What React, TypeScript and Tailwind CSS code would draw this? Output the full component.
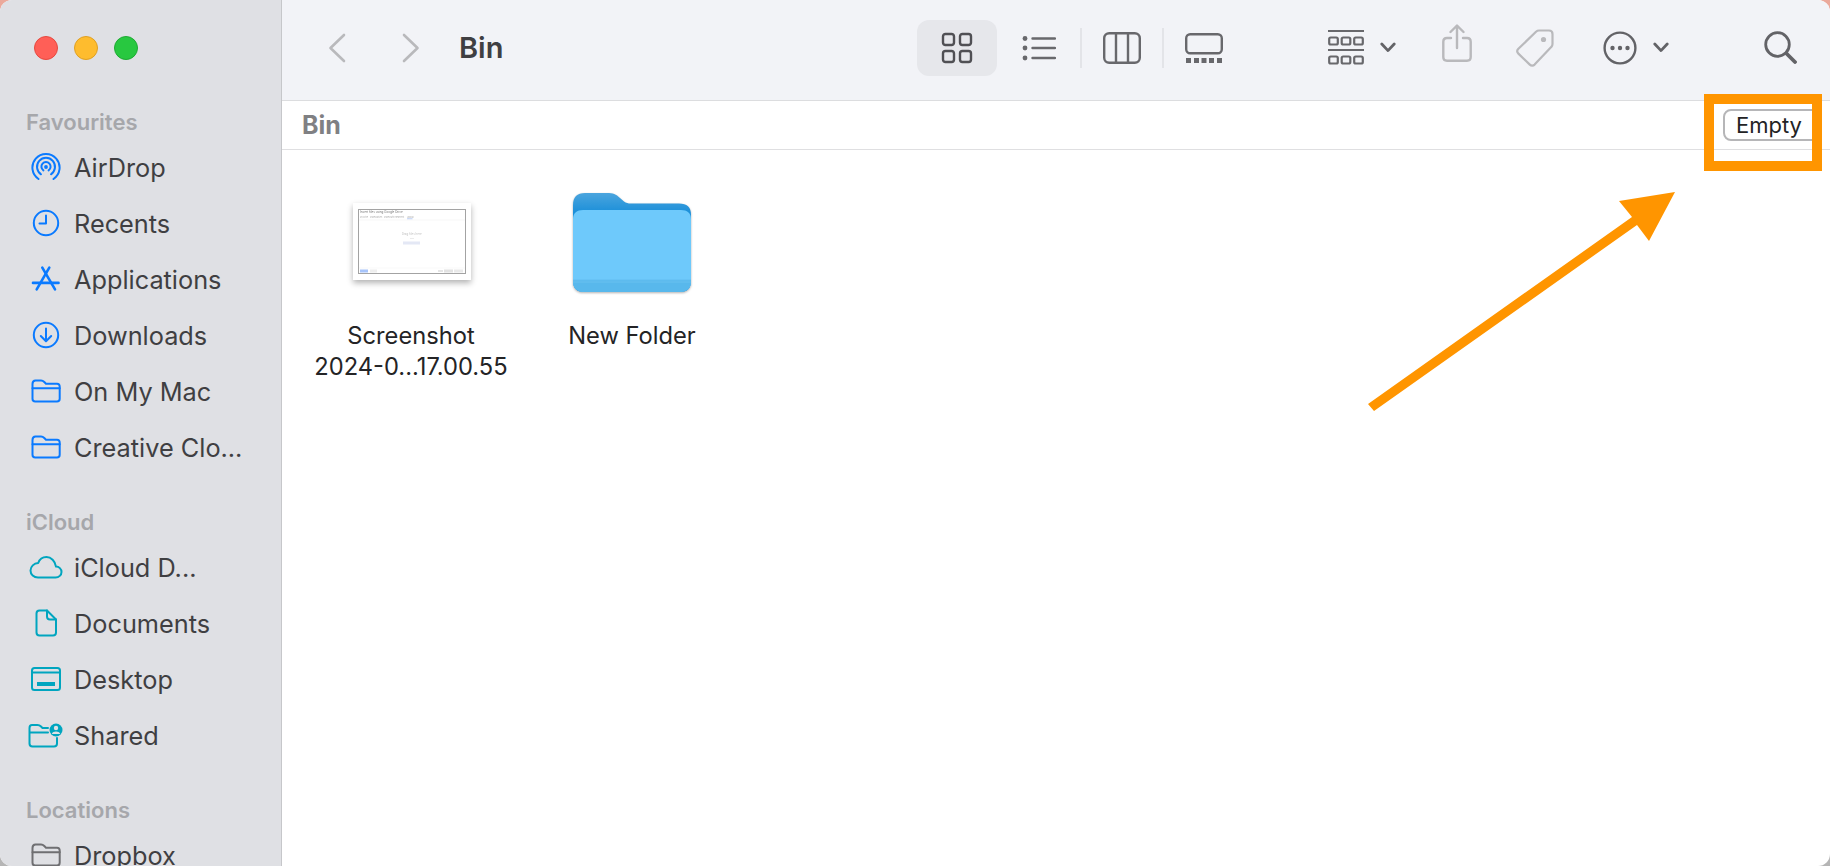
import type { ReactNode } from "react";

const BLUE = "#0a7aff";
const TEAL = "#00a5bf";
const GRAY = "#6f6f72";

const Glyph = ({ w, h, children, className = "" }: { w: number; h: number; children: ReactNode; className?: string }) => (
  <svg width={w} height={h} viewBox={`0 0 ${w} ${h}`} fill="none" strokeLinecap="round" strokeLinejoin="round" className={`block shrink-0 ${className}`}>
    {children}
  </svg>
);

const AirDropIcon = () => (
  <Glyph w={30} h={30}>
    <g stroke={BLUE} strokeWidth="2">
      <path d="M7.5 27a13.6 13.6 0 1 1 15 0" />
      <path d="M10 22.3a9 9 0 1 1 10 0" />
      <path d="M12.4 18.4a4.6 4.6 0 1 1 5.2 0" />
    </g>
    <circle cx="15" cy="15" r="1.9" fill={BLUE} />
  </Glyph>
);

const ClockIcon = () => (
  <Glyph w={30} h={30}>
    <circle cx="15" cy="15" r="12.2" stroke={BLUE} strokeWidth="2" />
    <path d="M15 7.5V15.5H8.5" stroke={BLUE} strokeWidth="2" />
  </Glyph>
);

const AppsIcon = () => (
  <Glyph w={30} h={30}>
    <g stroke={BLUE} strokeWidth="2.6">
      <path d="M11.3 3.7 24 25.3" />
      <path d="M18.3 3.7 5.7 25.3" />
      <path d="M2 18.9H27.5" />
    </g>
  </Glyph>
);

const DownloadIcon = () => (
  <Glyph w={30} h={30}>
    <circle cx="15" cy="15" r="12.2" stroke={BLUE} strokeWidth="2" />
    <path d="M15 8.5V21M9.8 16 15 21.2 20.2 16" stroke={BLUE} strokeWidth="2" />
  </Glyph>
);

const FolderIcon = ({ color }: { color: string }) => (
  <Glyph w={30} h={24}>
    <path
      d="M1.5 5C1.5 2.8 2.6 1.5 4.5 1.5H10C11.5 1.5 12.3 2 13.3 3L15 4.7H26C27.8 4.7 28.7 5.8 28.7 7.5V19.8C28.7 21.6 27.8 22.6 26 22.6H4.2C2.4 22.6 1.5 21.6 1.5 19.8Z"
      stroke={color}
      strokeWidth="2"
    />
    <path d="M1.5 9.3H28.7" stroke={color} strokeWidth="2" />
  </Glyph>
);

const CloudIcon = () => (
  <Glyph w={34} h={24}>
    <path
      d="M9 22.5H26.5C30 22.5 32.5 20 32.5 17C32.5 13.8 30 11.6 27 11.6C26.2 6 22 2 17.5 2C13.5 2 10.5 4.3 9.2 8C5 8.3 1.5 11.5 1.5 15.5C1.5 19.5 4.8 22.5 9 22.5Z"
      stroke={TEAL}
      strokeWidth="2"
    />
  </Glyph>
);

const DocIcon = () => (
  <Glyph w={24} h={28}>
    <path
      d="M5.5 1.5H13L22 10.5V23.5C22 25.5 21 26.5 19 26.5H5.5C3.5 26.5 2.5 25.5 2.5 23.5V4.5C2.5 2.5 3.5 1.5 5.5 1.5Z"
      stroke={TEAL}
      strokeWidth="2"
    />
    <path d="M13 1.5V7.5C13 9.5 14 10.5 16 10.5H22" stroke={TEAL} strokeWidth="2" />
  </Glyph>
);

const DesktopIcon = () => (
  <Glyph w={30} h={24}>
    <rect x="1" y="1" width="28" height="22" rx="2.5" stroke={TEAL} strokeWidth="2" />
    <path d="M1 5.5H29" stroke={TEAL} strokeWidth="2" />
    <rect x="6" y="15" width="18" height="4" fill={TEAL} />
  </Glyph>
);

const SharedIcon = () => (
  <Glyph w={35} h={25}>
    <path
      d="M1.5 5C1.5 3 2.5 2 4 2H9.5C11 2 12 2.5 13 3.5L14.5 5H20M1.5 9.5H20M29 15V20.5C29 22.5 28 23.5 26 23.5H4.5C2.5 23.5 1.5 22.5 1.5 20.5V5"
      stroke={TEAL}
      strokeWidth="2"
    />
    <circle cx="28" cy="7" r="6.5" fill={TEAL} />
    <circle cx="28" cy="5" r="2.2" fill="#dfe0e4" />
    <path d="M23.8 11C24.5 9 26 8.4 28 8.4C30 8.4 31.5 9 32.2 11Z" fill="#dfe0e4" />
  </Glyph>
);

const favourites = [
  { icon: <AirDropIcon />, label: "AirDrop" },
  { icon: <ClockIcon />, label: "Recents" },
  { icon: <AppsIcon />, label: "Applications" },
  { icon: <DownloadIcon />, label: "Downloads" },
  { icon: <FolderIcon color={BLUE} />, label: "On My Mac" },
  { icon: <FolderIcon color={BLUE} />, label: "Creative Clo..." },
];

const icloud = [
  { icon: <CloudIcon />, label: "iCloud D..." },
  { icon: <DocIcon />, label: "Documents" },
  { icon: <DesktopIcon />, label: "Desktop" },
  { icon: <SharedIcon />, label: "Shared" },
];

const locations = [{ icon: <FolderIcon color={GRAY} />, label: "Dropbox" }];

const SidebarSection = ({ title, rows, className = "" }: { title: string; rows: { icon: ReactNode; label: string }[]; className?: string }) => (
  <div className={className}>
    <div className="mb-[3px] flex h-[28px] items-center pl-[26px] text-[22px] font-semibold text-[#a6a7ab]">{title}</div>
    {rows.map((r) => (
      <div key={r.label} className="flex h-[56px] items-center">
        <div className="flex w-[74px] shrink-0 justify-center pl-[17px]">{r.icon}</div>
        <span className="mt-[1px] whitespace-nowrap text-[25.3px] text-[#3f3f42]">{r.label}</span>
      </div>
    ))}
  </div>
);

const Chevron = ({ dir }: { dir: "left" | "right" }) => (
  <Glyph w={18} h={30}>
    <path d={dir === "left" ? "M16 2 2.5 15 16 28" : "M2 2 15.5 15 2 28"} stroke="#b9b9bc" strokeWidth="2.6" />
  </Glyph>
);

const SmallChevron = () => (
  <Glyph w={16} h={11}>
    <path d="M1.8 2 8 8.6 14.2 2" stroke="#636367" strokeWidth="2.8" />
  </Glyph>
);

const IconGrid = () => (
  <Glyph w={32} h={32}>
    <g stroke="#505054" strokeWidth="2.4">
      <rect x="2" y="2" width="11" height="11" rx="2.4" />
      <rect x="19" y="2" width="11" height="11" rx="2.4" />
      <rect x="2" y="19" width="11" height="11" rx="2.4" />
      <rect x="19" y="19" width="11" height="11" rx="2.4" />
    </g>
  </Glyph>
);

const IconList = () => (
  <Glyph w={34} h={26}>
    <g fill="#68686c">
      <circle cx="3" cy="3.5" r="2.4" />
      <circle cx="3" cy="13" r="2.4" />
      <circle cx="3" cy="23" r="2.4" />
    </g>
    <path d="M10.5 3.5H33M10.5 13H33M10.5 23H33" stroke="#68686c" strokeWidth="2.4" />
  </Glyph>
);

const IconColumns = () => (
  <Glyph w={38} h={32}>
    <rect x="1.2" y="1.2" width="35.6" height="29.6" rx="5" stroke="#68686c" strokeWidth="2.4" />
    <path d="M13 1.2V30.8M25 1.2V30.8" stroke="#68686c" strokeWidth="2.4" />
  </Glyph>
);

const IconGallery = () => (
  <Glyph w={38} h={30}>
    <rect x="1.2" y="1.2" width="35.6" height="19" rx="4" stroke="#68686c" strokeWidth="2.4" />
    <g fill="#68686c">
      <rect x="1" y="25" width="5" height="5" />
      <rect x="9" y="25" width="5" height="5" />
      <rect x="16.5" y="25" width="5" height="5" />
      <rect x="24" y="25" width="5" height="5" />
      <rect x="32" y="25" width="5" height="5" />
    </g>
  </Glyph>
);

const IconGroup = () => (
  <Glyph w={36} h={35}>
    <g stroke="#68686c" strokeWidth="2.2">
      <path d="M0.5 1H35.5M0.5 20H35.5" />
      <rect x="1.2" y="7.5" width="8.6" height="7" rx="1.5" />
      <rect x="13.7" y="7.5" width="8.6" height="7" rx="1.5" />
      <rect x="26.2" y="7.5" width="8.6" height="7" rx="1.5" />
      <rect x="1.2" y="26.5" width="8.6" height="7" rx="1.5" />
      <rect x="13.7" y="26.5" width="8.6" height="7" rx="1.5" />
      <rect x="26.2" y="26.5" width="8.6" height="7" rx="1.5" />
    </g>
  </Glyph>
);

const IconShare = () => (
  <Glyph w={30} h={38}>
    <path d="M9 14H5C2.5 14 1.3 15.2 1.3 17.7V33C1.3 35.5 2.5 36.7 5 36.7H25C27.5 36.7 28.7 35.5 28.7 33V17.7C28.7 15.2 27.5 14 25 14H21" stroke="#b9b9bc" strokeWidth="2.4" />
    <path d="M15 24V2M8.5 8 15 1.5 21.5 8" stroke="#b9b9bc" strokeWidth="2.4" />
  </Glyph>
);

const IconTag = () => (
  <Glyph w={38} h={38}>
    <path d="M23 1.5H33C35.2 1.5 36.5 2.8 36.5 5V15C36.5 16.2 36.1 17.2 35.2 18.1L18.6 35.6C17.2 37 15.2 37 13.8 35.6L2.4 24.6C1 23.2 1 21.2 2.4 19.8L20 2.7C20.9 1.9 21.8 1.5 23 1.5Z" stroke="#b9b9bc" strokeWidth="2.2" />
    <circle cx="27.5" cy="10.5" r="2.6" fill="#b9b9bc" />
  </Glyph>
);

const IconMore = () => (
  <Glyph w={34} h={34}>
    <circle cx="17" cy="17" r="15.4" stroke="#636367" strokeWidth="2.4" />
    <g fill="#636367">
      <circle cx="9.5" cy="17" r="2.2" />
      <circle cx="17" cy="17" r="2.2" />
      <circle cx="24.5" cy="17" r="2.2" />
    </g>
  </Glyph>
);

const IconSearch = () => (
  <Glyph w={33} h={33}>
    <circle cx="13.5" cy="13.5" r="11.8" stroke="#636367" strokeWidth="2.8" />
    <path d="M22.5 22.5 31 31" stroke="#636367" strokeWidth="3.8" />
  </Glyph>
);

const Divider = ({ className = "" }: { className?: string }) => <div className={`h-[40px] w-[2px] shrink-0 bg-[#e3e4e8] ${className}`} />;

const Thumbnail = () => (
  <div className="h-[77px] w-[118px] bg-white shadow-[0_3px_6px_rgba(0,0,0,0.3)]">
    <svg width="118" height="77" viewBox="0 0 118 77" className="block blur-[0.4px]" fontFamily="Inter, sans-serif">
      <rect x="5.5" y="6.5" width="107" height="64" fill="white" stroke="#a3a3a3" />
      <text x="7" y="10" fontSize="3" fill="#777">Insert files using Google Drive</text>
      <g fontSize="1.9" fill="#aaa">
        <text x="7" y="14.5">My Drive</text>
        <text x="17" y="14.5">Shared drives</text>
        <text x="31" y="14.5">Shared with me</text>
        <text x="45" y="14.5">Recent</text>
        <text x="54" y="14.5">Upload</text>
      </g>
      <rect x="54" y="15.5" width="5.5" height="0.7" fill="#9db9f2" />
      <path d="M6 17H112" stroke="#eee" strokeWidth="0.5" />
      <text x="58.7" y="32" fontSize="2.9" fill="#c4c4c4" textAnchor="middle">Drag files here</text>
      <path d="M57 35.5H61" stroke="#ccc" strokeWidth="0.4" />
      <rect x="50" y="38.5" width="17" height="3" fill="#e4e8f5" />
      <path d="M6 65H112" stroke="#f0f0f0" strokeWidth="0.4" />
      <rect x="7" y="66.5" width="8" height="3" fill="#a7c4fa" />
      <rect x="17" y="66.5" width="7" height="3" fill="#eee" />
      <rect x="85" y="67.5" width="5" height="1" fill="#ccc" />
      <rect x="91" y="66.5" width="9" height="3" fill="#e2e2e2" />
      <rect x="101" y="66.5" width="9" height="3" fill="#e9e9e9" />
    </svg>
  </div>
);

const BlueFolder = () => (
  <svg width="118" height="100" viewBox="0 0 118 100" className="block drop-shadow-[0_1px_1px_rgba(0,0,0,0.3)]">
    <defs>
      <linearGradient id="back" x1="0" y1="0" x2="0" y2="1">
        <stop offset="0" stopColor="#4ba5de" />
        <stop offset="0.2" stopColor="#1b8fd9" />
      </linearGradient>
    </defs>
    <path d="M0 12C0 4 4 0 12 0H34C40 0 43 1 47 5L51 8.5C53 10 55 10.5 58 10.5H106C114 10.5 118 14 118 22V88C118 96 114 99 106 99H12C4 99 0 96 0 88Z" fill="url(#back)" />
    <path d="M0 26C0 20 4 17 10 17H108C114 17 118 20 118 26V88C118 95 114 99 106 99H12C4 99 0 95 0 88Z" fill="#6ec9fb" />
    <path d="M0 87V88C0 95 4 99 12 99H106C114 99 118 95 118 88V87Z" fill="#58b8ec" />
    <path d="M0 89H118" stroke="#69c1f0" strokeWidth="1" />
    <path d="M0 87H118" stroke="#62bdf0" strokeWidth="1" />
  </svg>
);

export default function App() {
  return (
    <div className="relative h-[866px] w-[1830px] overflow-hidden bg-gradient-to-b from-[#eba99b] to-[#b5b5b5] font-['Inter','Liberation_Sans',sans-serif] antialiased">
      <div className="flex h-full overflow-hidden rounded-[12px] bg-white">
        <aside className="h-full w-[282px] shrink-0 overflow-hidden border-r border-[#c6c7ca] bg-[#dfe0e4]">
          <div className="mb-[48px] mt-[36px] flex gap-[16px] pl-[34px]">
            <div className="h-[24px] w-[24px] rounded-full border border-[#e6493f] bg-[#ff5f57]" />
            <div className="h-[24px] w-[24px] rounded-full border border-[#dfa023] bg-[#febc2e]" />
            <div className="h-[24px] w-[24px] rounded-full border border-[#1eaa33] bg-[#28c840]" />
          </div>
          <SidebarSection title="Favourites" rows={favourites} />
          <SidebarSection title="iCloud" rows={icloud} className="mt-[33px]" />
          <SidebarSection title="Locations" rows={locations} className="mt-[33px]" />
        </aside>

        <main className="flex min-w-0 flex-1 flex-col">
          <header className="flex h-[101px] shrink-0 items-center border-b border-[#dcdddf] bg-[#f2f3f7] pb-[5px]">
            <div className="ml-[46px] flex items-center gap-[56px]">
              <Chevron dir="left" />
              <Chevron dir="right" />
            </div>
            <h1 className="ml-[39px] w-[458px] text-[29px] font-semibold text-[#3f3f42]">Bin</h1>
            <div className="flex h-[56px] w-[80px] items-center justify-center rounded-[12px] bg-[#e6e7eb]">
              <IconGrid />
            </div>
            <div className="ml-[25px]"><IconList /></div>
            <Divider className="ml-[24px]" />
            <div className="ml-[21px]"><IconColumns /></div>
            <Divider className="ml-[21px]" />
            <div className="ml-[21px]"><IconGallery /></div>
            <div className="ml-[105px]"><IconGroup /></div>
            <div className="ml-[16px]"><SmallChevron /></div>
            <div className="ml-[46px] -mt-[10px]"><IconShare /></div>
            <div className="ml-[44px]"><IconTag /></div>
            <div className="ml-[49px]"><IconMore /></div>
            <div className="ml-[16px]"><SmallChevron /></div>
            <div className="ml-[95px]"><IconSearch /></div>
          </header>

          <div className="flex h-[49px] shrink-0 items-center justify-between border-b border-[#dfdfe1] pl-[20px]">
            <span className="mt-[2px] text-[25px] font-bold text-[#808083]">Bin</span>
            <div className="mr-[10px] flex h-[32px] w-[97px] items-center rounded-[8px] border-2 border-[#b6b6b8] pl-[11px] text-[22px] text-[#232325]">
              Empty
            </div>
          </div>

          <div className="flex flex-1 items-start pl-[21px]">
            <div className="flex w-[216px] flex-col items-center">
              <div className="mb-[40px] ml-[2px] mt-[53px] flex h-[77px] items-center"><Thumbnail /></div>
              <p className="text-center text-[23.7px] leading-[31px] text-[#242426]">
                Screenshot
                <br />
                2024-0...17.00.55
              </p>
            </div>
            <div className="ml-[9px] flex w-[208px] flex-col items-center">
              <div className="mb-[27px] mt-[43px]"><BlueFolder /></div>
              <p className="text-center text-[23.7px] leading-[31px] text-[#242426]">New Folder</p>
            </div>
          </div>
        </main>
      </div>

      {/* annotation over the window */}
      <div className="absolute left-[1704px] top-[94px] h-[77px] w-[118px] border-[10px] border-[#ff9500]" />
      <svg width="1830" height="866" viewBox="0 0 1830 866" className="pointer-events-none absolute left-0 top-0">
        <polygon points="1368,404 1632,217 1619,201 1675,192 1649,241 1637,225 1374,411" fill="#ff9500" />
      </svg>
    </div>
  );
}
